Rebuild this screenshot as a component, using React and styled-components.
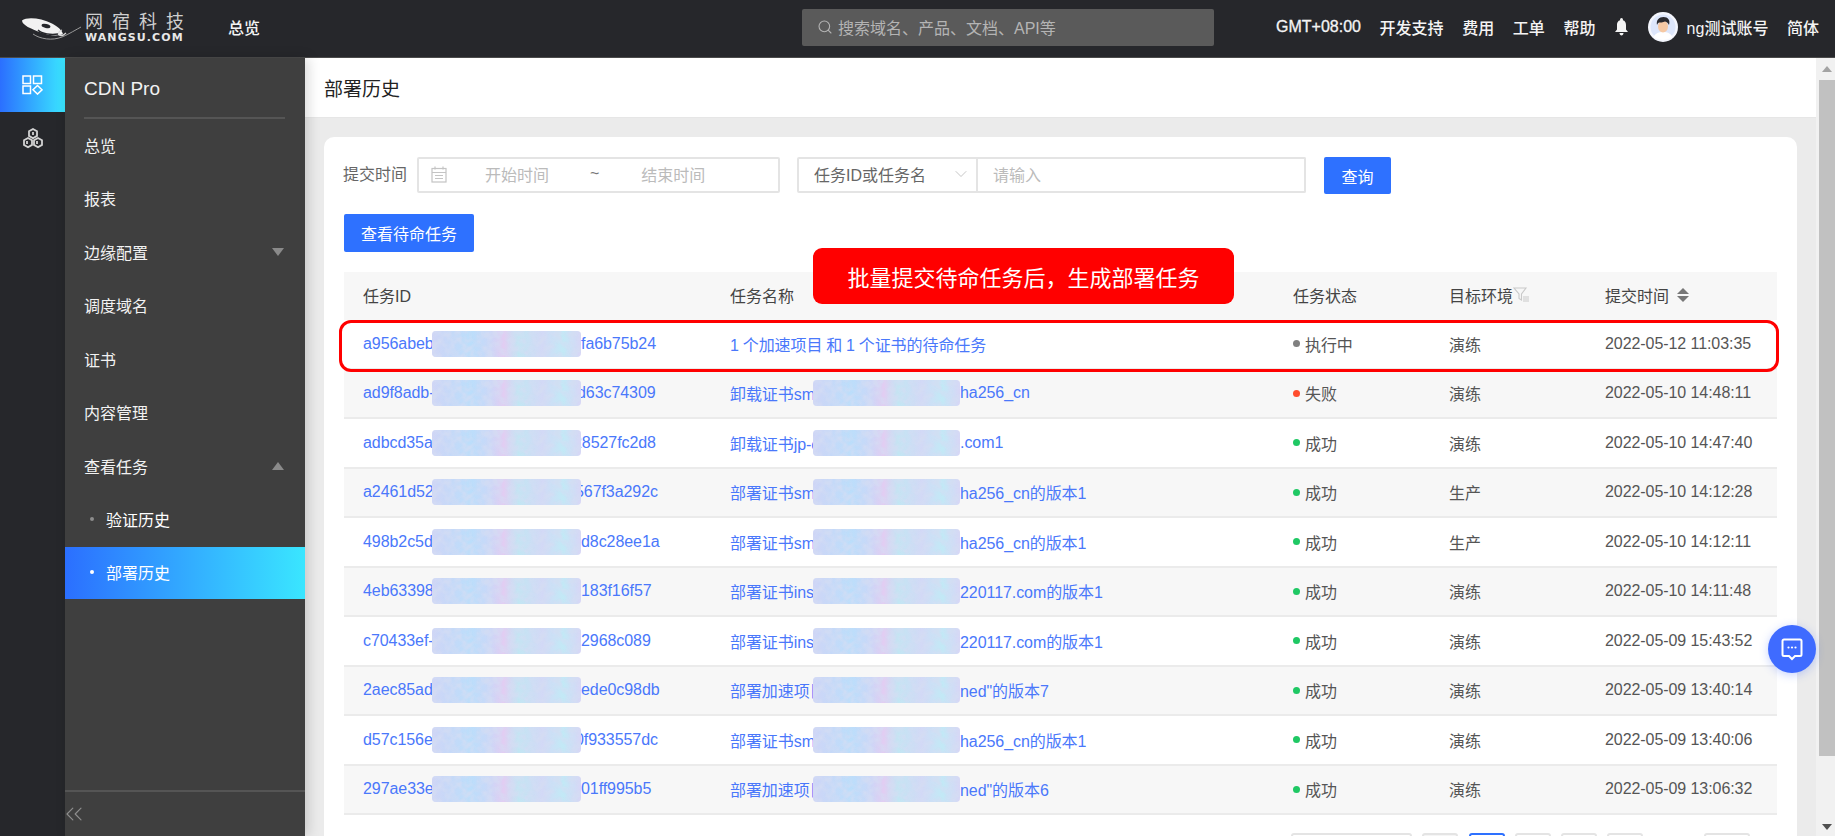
import React from "react";
import styled, {createGlobalStyle} from "styled-components";
import {Search, ChevronDown, ChevronsLeft} from "lucide-react";

const GlobalStyle = createGlobalStyle`
  html, body {
    margin: 0;
    padding: 0;
    height: 100%;
    overflow: hidden;
  }
  body {
    font-family: "Liberation Sans", "Noto Sans CJK SC", sans-serif;
    font-size: 16px;
    color: #555;
  }
  * {
    box-sizing: border-box;
  }
`;

const Page = styled.div`
  width: 100%;
  height: 100vh;
  display: flex;
  flex-direction: column;
  overflow: hidden;
  background: #ebebeb;
`;

/* top bar */

const TopBar = styled.header`
  height: 58px;
  flex: none;
  display: flex;
  align-items: center;
  padding-bottom: 3px;
  background: #26272b;
  border-bottom: 1px solid #4b4b4b;
  color: #f4f4f4;
`;

const LogoWrap = styled.div`
  width: 228px;
  flex: none;
  display: flex;
  align-items: center;
  margin-top: 3px;
  padding-left: 21px;
`;

const LogoText = styled.div`
  margin-left: 2px;
  display: flex;
  flex-direction: column;
  align-items: flex-start;
`;

const LogoName = styled.span`
  font-family: "Liberation Serif", "Noto Sans CJK SC", serif;
  font-size: 18px;
  line-height: 18px;
  letter-spacing: 9px;
  color: #cfcfcf;
  white-space: nowrap;
`;

const LogoDomain = styled.span`
  font-family: "DejaVu Sans", sans-serif;
  font-weight: 700;
  font-size: 11px;
  line-height: 12px;
  letter-spacing: 1.1px;
  margin-top: 1px;
  color: #e8e8e8;
  white-space: nowrap;
`;

const TopLink = styled.span`
  font-size: 16px;
  font-weight: 500;
  white-space: nowrap;
`;

const LatinLink = styled(TopLink)`
  -webkit-text-stroke: 0.3px #f4f4f4;
`;

const SearchBox = styled.div`
  width: 412px;
  height: 37px;
  margin-left: 542px;
  flex: none;
  display: flex;
  align-items: center;
  gap: 5px;
  padding-left: 15px;
  background: #5a5a5a;
  border-radius: 2px;
  color: #b4b4b4;
`;

const TopActions = styled.div`
  margin-left: 62px;
  display: flex;
  align-items: center;
  gap: 18.6px;
`;

const UserBlock = styled.div`
  display: flex;
  align-items: center;
  gap: 9px;
`;

/* side navigation */

const Body = styled.div`
  flex: 1;
  min-height: 0;
  display: flex;
`;

const Rail = styled.nav`
  width: 65px;
  flex: none;
  background: #26272b;
`;

const RailItem = styled.div`
  height: 53.5px;
  display: flex;
  align-items: center;
  justify-content: center;
  background: ${p => (p.$active ? "linear-gradient(90deg, #2b6fff, #3ae6ff)" : "transparent")};
`;

const Menu = styled.aside`
  width: 240px;
  flex: none;
  display: flex;
  flex-direction: column;
  background: #3f3f3f;
  color: #f2f2f2;
  box-shadow: 3px 0 12px rgba(0, 0, 0, 0.16);
  z-index: 2;
`;

const MenuTitle = styled.div`
  height: 61px;
  margin: 0 20px 0 19px;
  padding-top: 2px;
  display: flex;
  align-items: center;
  font-size: 19px;
  border-bottom: 2px solid #555;
`;

const MenuList = styled.div`
  flex: 1;
`;

const MenuItem = styled.div`
  height: 53.5px;
  display: flex;
  align-items: center;
  justify-content: space-between;
  padding: 0 21px 2px 19px;
`;

const Caret = styled.i`
  width: 0;
  height: 0;
  border-left: 6px solid transparent;
  border-right: 6px solid transparent;
  border-top: ${p => (p.$up ? "0" : "8px solid #8a8a8a")};
  border-bottom: ${p => (p.$up ? "8px solid #8a8a8a" : "0")};
`;

const SubItem = styled.div`
  height: ${p => (p.$active ? "52.5px" : "53px")};
  display: flex;
  align-items: center;
  gap: 12px;
  padding: 0 0 2px 25px;
  color: #fff;
  background: ${p => (p.$active ? "linear-gradient(90deg, #2b6fff, #3ae6ff)" : "transparent")};
  &::before {
    content: "";
    width: 4px;
    height: 4px;
    border-radius: 50%;
    background: ${p => (p.$active ? "#fff" : "#8d8d8d")};
  }
`;

const MenuFooter = styled.div`
  height: 46px;
  flex: none;
  display: flex;
  align-items: center;
  border-top: 2px solid #555;
  color: #8e8e8e;
  svg {
    margin-left: -5px;
  }
`;

/* content */

const Main = styled.main`
  flex: 1;
  min-width: 0;
  display: flex;
  flex-direction: column;
  overflow: hidden;
`;

const TitleBar = styled.div`
  height: 60px;
  flex: none;
  display: flex;
  align-items: center;
  padding-left: 19px;
  background: #fff;
  font-size: 19px;
  color: #222;
  border-bottom: 1px solid #e6e6e6;
`;

const Content = styled.div`
  padding: 19px 19px 0;
`;

const Card = styled.section`
  padding: 20px 20px 40px;
  background: #fff;
  border-radius: 10px 10px 0 0;
`;

const FilterRow = styled.div`
  display: flex;
  align-items: flex-start;
  height: 37px;
`;

const FilterLabel = styled.label`
  width: 73px;
  margin-left: -1px;
  line-height: 35px;
  color: #666;
  white-space: nowrap;
`;

const DateField = styled.div`
  width: 363px;
  height: 36px;
  margin-left: 1px;
  display: flex;
  align-items: center;
  padding: 0 0 2px 12px;
  border: 2px solid #e4e4e4;
  border-radius: 2px;
  color: #bbb;
`;

const DateStart = styled.span`
  margin-left: 38px;
`;

const DateSep = styled.span`
  margin-left: 41px;
  color: #777;
`;

const DateEnd = styled.span`
  margin-left: 42px;
`;

const SelectField = styled.div`
  width: 181px;
  height: 36px;
  margin-left: 17px;
  display: flex;
  align-items: center;
  justify-content: space-between;
  padding: 0 5px 2px 15px;
  border: 2px solid #e4e4e4;
  border-radius: 2px 0 0 2px;
  color: #666;
`;

const TextField = styled.div`
  width: 328px;
  height: 36px;
  display: flex;
  align-items: center;
  padding: 0 0 2px 15px;
  border: 2px solid #e4e4e4;
  border-left: 0;
  border-radius: 0 2px 2px 0;
  color: #bbb;
`;

const PrimaryButton = styled.button`
  height: ${p => (p.$tall ? "38px" : "37px")};
  width: ${p => (p.$tall ? "130px" : "67px")};
  margin-left: ${p => (p.$tall ? "0" : "18px")};
  padding: 0;
  border: 0;
  border-radius: 2px;
  font: inherit;
  color: #fff;
  background: #2e71ff;
`;

const ActionRow = styled.div`
  margin: 20px 0;
`;

const TableWrap = styled.div`
  position: relative;
`;

const Callout = styled.div`
  position: absolute;
  left: 469px;
  top: -24px;
  width: 421px;
  height: 56px;
  display: flex;
  align-items: center;
  justify-content: center;
  border-radius: 9px;
  background: #f00;
  color: #fff;
  font-size: 22px;
  white-space: nowrap;
  z-index: 2;
`;

const Highlight = styled.div`
  position: absolute;
  left: -5px;
  top: 48px;
  width: calc(100% + 7px);
  height: 52px;
  border: 3px solid #f00;
  border-radius: 12px;
  pointer-events: none;
`;

const columns = "367px 563px 156px 156px 1fr";

const HeadRow = styled.div`
  height: 48px;
  padding-bottom: 3px;
  display: grid;
  grid-template-columns: ${columns};
  align-items: center;
  background: #f7f7f7;
  color: #444;
`;

const HeadCell = styled.div`
  display: flex;
  align-items: center;
  padding-left: 19px;
`;

const Row = styled.div`
  height: 49.5px;
  display: grid;
  grid-template-columns: ${columns};
  align-items: center;
  background: ${p => (p.$striped ? "#f7f7f7" : "#fff")};
  border-bottom: 2px solid #ebebeb;
`;

const Cell = styled.div`
  display: flex;
  align-items: center;
  padding-left: 19px;
  white-space: nowrap;
  letter-spacing: -0.07px;
`;

const LinkCell = styled(Cell)`
  color: #4a78fb;
`;

const TitleText = styled.span`
  word-spacing: -0.5px;
`;

const Prefix = styled.span`
  width: ${p => p.$width}px;
  flex: none;
`;

const Suffix = styled.span`
  margin-left: ${p => p.$shift || 0}px;
`;

const Mask = styled.span`
  position: relative;
  width: ${p => p.$width}px;
  height: 26px;
  flex: none;
  overflow: hidden;
  border-radius: 4px;
  z-index: 1;
  background: linear-gradient(90deg, #cfd5f6, #bbdefb 26%, #c9d8f8 38%, #e2cdf2 48%, #c2e6f3 58%, #d3d9f6 74%, #c2e9f6 88%, #d8d6f6);
  svg {
    position: absolute;
    inset: 0;
    width: 100%;
    height: 100%;
  }
`;

const Dot = styled.i`
  width: 7px;
  height: 7px;
  margin-right: 5px;
  border-radius: 50%;
  background: ${p => p.$color};
`;

const Pager = styled.div`
  margin-top: 18px;
  display: flex;
  justify-content: flex-end;
  padding-right: 27px;
`;

const PageSize = styled.div`
  width: 121px;
  height: 36px;
  margin-right: 10px;
  border: 2px solid #e4e4e4;
  border-radius: 3px;
`;

const PageButton = styled.div`
  width: 36px;
  height: 36px;
  margin-right: ${p => p.$gap || 10}px;
  border: 2px solid ${p => (p.$active ? "#2e71ff" : "#e4e4e4")};
  border-radius: 3px;
  background: ${p => (p.$muted ? "#f5f5f5" : "#fff")};
`;

const LastButton = styled(PageButton)`
  width: 46px;
  margin-right: 0;
`;

const Scrollbar = styled.div`
  width: 19px;
  flex: none;
  padding-left: 3px;
  display: flex;
  flex-direction: column;
  align-items: center;
  background: #f1f1f1;
`;

const ScrollArrow = styled.div`
  height: ${p => (p.$down ? "auto" : "22px")};
  margin-top: ${p => (p.$down ? "auto" : "0")};
  margin-bottom: ${p => (p.$down ? "6px" : "0")};
  display: flex;
  align-items: center;
`;

const ScrollArrowMark = styled.i`
  width: 0;
  height: 0;
  border-left: 5px solid transparent;
  border-right: 5px solid transparent;
  border-top: ${p => (p.$down ? "6px solid #505050" : "0")};
  border-bottom: ${p => (p.$down ? "0" : "6px solid #a3a3a3")};
`;

const ScrollThumb = styled.div`
  width: 16px;
  height: 676px;
  background: #c1c1c1;
`;

const ChatBubble = styled.div`
  position: fixed;
  left: 1768px;
  top: 625px;
  width: 48px;
  height: 48px;
  display: flex;
  align-items: center;
  justify-content: center;
  border-radius: 50%;
  background: #3f6bff;
  box-shadow: 0 2px 10px rgba(63, 107, 255, 0.3);
  z-index: 3;
`;

const SortIcon = styled.span`
  margin-left: 8px;
  display: flex;
  flex-direction: column;
  gap: 2px;
  &::before,
  &::after {
    content: "";
    width: 0;
    height: 0;
    border-left: 6px solid transparent;
    border-right: 6px solid transparent;
  }
  &::before {
    border-bottom: 6px solid #777;
  }
  &::after {
    border-top: 6px solid #777;
  }
`;

const LogoMark = () => (
  <svg width="62" height="24" viewBox="0 0 62 24">
    <path d="M1 3.5C6-.5 20 1 31 6.5c6 3 10 7 11 10.500-5 2.500-14 1.500-22-1.500C10 12 1 8 1 3.500z" fill="#f2f2f2" />
    <ellipse cx="25" cy="9" rx="4.500" ry="2" fill="#26272b" transform="rotate(12 25 9)" />
    <path d="M17 13c4 4 13 5 20 4" stroke="#26272b" strokeWidth="1.400" fill="none" />
    <path d="M12 17c7 5 19 7 29 3 5-2 10-5 19-10" stroke="#9a9a9a" strokeWidth="1" fill="none" />
    <path d="M41 13c-3 1-4 3-3 5 2 1 5 0 7-2" stroke="#d8d8d8" strokeWidth="1.200" fill="none" />
  </svg>
);

const DashboardIcon = () => (
  <svg width="21" height="20" viewBox="0 0 21 20" fill="none" stroke="#fff" strokeWidth="1.500">
    <rect x="1" y="1" width="7.500" height="7.500" />
    <rect x="11.500" y="1" width="8" height="7.500" />
    <rect x="1" y="11" width="7.500" height="7.500" />
    <path d="M15.500 10.500l4.500 4.300-4.500 4.300-4.500-4.300z" />
  </svg>
);

const ClusterIcon = () => (
  <svg width="22" height="21" viewBox="0 0 22 21" fill="none" stroke="#d2d2d2" strokeWidth="1.800">
    <path d="M11 1l4 2.300v4.600l-4 2.300-4-2.300V3.300z" />
    <path d="M6 10l4 2.300v4.600l-4 2.300-4-2.300v-4.600z" />
    <path d="M16 10l4 2.300v4.600l-4 2.300-4-2.300v-4.600z" />
    <path d="M11 4v3M5 13v3M15 13v3" />
  </svg>
);

const BellIcon = () => (
  <svg width="15" height="18" viewBox="0 0 15 18" fill="#f4f4f4">
    <circle cx="7.500" cy="1.500" r="1.500" />
    <path d="M7.500 2C4.500 2 3 4.300 3 7v4.500L1 14h13l-2-2.500V7c0-2.700-1.500-5-4.500-5z" />
    <path d="M5.500 15h4c0 1.500-1 2.500-2 2.500s-2-1-2-2.500z" />
  </svg>
);

const Avatar = () => (
  <svg width="30" height="30" viewBox="0 0 30 30">
    <circle cx="15" cy="15" r="15" fill="#f4f6fd" />
    <circle cx="15" cy="15" r="12.500" fill="#dde6fb" />
    <path d="M5.500 25c2-4 5.500-5 9.500-5s7.500 1 9.500 5c-5 4-14 4-19 0z" fill="#fff" />
    <ellipse cx="15" cy="14.500" rx="5" ry="6" fill="#f6c9a4" />
    <path d="M9 13c-1-5 2-8 6.500-8s7 3 5.500 8c-1-2-2-3-4-3.500-2 1-5 1-6 1-1 .5-1.500 1.500-2 2.500z" fill="#2b2b30" />
  </svg>
);

const CalendarIcon = () => (
  <svg width="16" height="17" viewBox="0 0 16 17" fill="none" stroke="#c4c4c4" strokeWidth="1.200">
    <rect x="1" y="2.500" width="14" height="13.500" />
    <path d="M1 6.500h14M4 .5v3M12 .5v3M4 9.500h8M4 12.500h8" />
  </svg>
);

const FilterIcon = () => (
  <svg width="17" height="17" viewBox="0 0 17 17" fill="none" stroke="#c9c9c9" strokeWidth="1.100">
    <path d="M1 2h12L8.500 8v6L6 12.500V8z" />
    <path d="M10 11h6M10 13h6M10 15h6" />
  </svg>
);

const ChatIcon = () => (
  <svg width="22" height="24" viewBox="0 0 22 24" fill="none">
    <path d="M3 2.500h16a1.500 1.500 0 0 1 1.500 1.500v13.500a1.500 1.500 0 0 1-1.500 1.500h-5l-3 3-3-3H3a1.500 1.500 0 0 1-1.500-1.500V4A1.500 1.500 0 0 1 3 2.500z" stroke="#fff" strokeWidth="2" />
    <circle cx="7.500" cy="10.500" r="1.100" fill="#fff" />
    <circle cx="11" cy="10.500" r="1.100" fill="#fff" />
    <circle cx="14.500" cy="10.500" r="1.100" fill="#fff" />
  </svg>
);

const MaskNoise = () => (
  <svg viewBox="0 0 149 26" preserveAspectRatio="none">
    <filter id="mottle" x="0" y="0" width="100%" height="100%">
      <feTurbulence type="fractalNoise" baseFrequency="0.13" numOctaves="2" seed="7" />
      <feColorMatrix values="0 0 0 0 0.66  0 0 0 0 0.72  0 0 0 0 0.90  3 0 0 0 -1.100" />
    </filter>
    <rect width="149" height="26" filter="url(#mottle)" opacity="0.7" />
  </svg>
);

const SM_VERSION = ["部署证书sm", "ha256_cn的版本1"];
const INS_VERSION = ["部署证书ins", "220117.com的版本1"];

const tasks = [
  {id: ["a956abeb", "fa6b75b24"], title: "1 个加速项目 和 1 个证书的待命任务", status: "执行中", env: "演练", time: "2022-05-12 11:03:35"},
  {id: ["ad9f8adb-", "d63c74309", -4], name: ["卸载证书sm", "ha256_cn"], status: "失败", env: "演练", time: "2022-05-10 14:48:11"},
  {id: ["adbcd35a", "28527fc2d8", -8], name: ["卸载证书jp-c", ".com1"], status: "成功", env: "演练", time: "2022-05-10 14:47:40"},
  {id: ["a2461d52", "567f3a292c", -6], name: SM_VERSION, status: "成功", env: "生产", time: "2022-05-10 14:12:28"},
  {id: ["498b2c5d", "d8c28ee1a"], name: SM_VERSION, status: "成功", env: "生产", time: "2022-05-10 14:12:11"},
  {id: ["4eb63398", "183f16f57"], name: INS_VERSION, status: "成功", env: "演练", time: "2022-05-10 14:11:48"},
  {id: ["c70433ef-", "2968c089"], name: INS_VERSION, status: "成功", env: "演练", time: "2022-05-09 15:43:52"},
  {id: ["2aec85ad", "ede0c98db"], name: ["部署加速项目", "ned\"的版本7"], status: "成功", env: "演练", time: "2022-05-09 13:40:14"},
  {id: ["d57c156e", "0f933557dc", -6], name: SM_VERSION, status: "成功", env: "演练", time: "2022-05-09 13:40:06"},
  {id: ["297ae33e", "01ff995b5"], name: ["部署加速项目", "ned\"的版本6"], status: "成功", env: "演练", time: "2022-05-09 13:06:32"}
];

const statusColors = {执行中: "#808080", 失败: "#ff4d2e", 成功: "#1fc864"};

const TaskRow = ({task, striped}) => (
  <Row $striped={striped}>
    <LinkCell>
      <Prefix $width={69}>{task.id[0]}</Prefix>
      <Mask $width={149}>
        <MaskNoise />
      </Mask>
      <Suffix $shift={task.id[2]}>{task.id[1]}</Suffix>
    </LinkCell>
    <LinkCell>
      {task.title ? (
        <TitleText>{task.title}</TitleText>
      ) : (
        <React.Fragment>
          <Prefix $width={83}>{task.name[0]}</Prefix>
          <Mask $width={147}>
            <MaskNoise />
          </Mask>
          <Suffix>{task.name[1]}</Suffix>
        </React.Fragment>
      )}
    </LinkCell>
    <Cell>
      <Dot $color={statusColors[task.status]} />
      {task.status}
    </Cell>
    <Cell>{task.env}</Cell>
    <Cell>{task.time}</Cell>
  </Row>
);

const App = () => (
  <Page>
    <GlobalStyle />
    <TopBar>
      <LogoWrap>
        <LogoMark />
        <LogoText>
          <LogoName>网宿科技</LogoName>
          <LogoDomain>WANGSU.COM</LogoDomain>
        </LogoText>
      </LogoWrap>
      <TopLink>总览</TopLink>
      <SearchBox>
        <Search size={16} strokeWidth={1.6} />
        搜索域名、产品、文档、API等
      </SearchBox>
      <TopActions>
        <LatinLink>GMT+08:00</LatinLink>
        <TopLink>开发支持</TopLink>
        <TopLink>费用</TopLink>
        <TopLink>工单</TopLink>
        <TopLink>帮助</TopLink>
        <BellIcon />
        <UserBlock>
          <Avatar />
          <TopLink>ng测试账号</TopLink>
        </UserBlock>
        <TopLink>简体</TopLink>
      </TopActions>
    </TopBar>
    <Body>
      <Rail>
        <RailItem $active>
          <DashboardIcon />
        </RailItem>
        <RailItem>
          <ClusterIcon />
        </RailItem>
      </Rail>
      <Menu>
        <MenuTitle>CDN Pro</MenuTitle>
        <MenuList>
          <MenuItem>总览</MenuItem>
          <MenuItem>报表</MenuItem>
          <MenuItem>
            边缘配置
            <Caret />
          </MenuItem>
          <MenuItem>调度域名</MenuItem>
          <MenuItem>证书</MenuItem>
          <MenuItem>内容管理</MenuItem>
          <MenuItem>
            查看任务
            <Caret $up />
          </MenuItem>
          <SubItem>验证历史</SubItem>
          <SubItem $active>部署历史</SubItem>
        </MenuList>
        <MenuFooter>
          <ChevronsLeft size={28} strokeWidth={1} />
        </MenuFooter>
      </Menu>
      <Main>
        <TitleBar>部署历史</TitleBar>
        <Content>
          <Card>
            <FilterRow>
              <FilterLabel>提交时间</FilterLabel>
              <DateField>
                <CalendarIcon />
                <DateStart>开始时间</DateStart>
                <DateSep>~</DateSep>
                <DateEnd>结束时间</DateEnd>
              </DateField>
              <SelectField>
                任务ID或任务名
                <ChevronDown size={20} strokeWidth={1} color="#bbb" />
              </SelectField>
              <TextField>请输入</TextField>
              <PrimaryButton>查询</PrimaryButton>
            </FilterRow>
            <ActionRow>
              <PrimaryButton $tall>查看待命任务</PrimaryButton>
            </ActionRow>
            <TableWrap>
              <Callout>批量提交待命任务后，生成部署任务</Callout>
              <HeadRow>
                <HeadCell>任务ID</HeadCell>
                <HeadCell>任务名称</HeadCell>
                <HeadCell>任务状态</HeadCell>
                <HeadCell>
                  目标环境
                  <FilterIcon />
                </HeadCell>
                <HeadCell>
                  提交时间
                  <SortIcon />
                </HeadCell>
              </HeadRow>
              {tasks.map((task, index) => (
                <TaskRow key={task.time} task={task} striped={index % 2 === 1} />
              ))}
              <Highlight />
            </TableWrap>
            <Pager>
              <PageSize />
              <PageButton $muted $gap={11} />
              <PageButton $active />
              <PageButton />
              <PageButton />
              <PageButton $gap={61} />
              <LastButton />
            </Pager>
          </Card>
        </Content>
      </Main>
      <Scrollbar>
        <ScrollArrow>
          <ScrollArrowMark />
        </ScrollArrow>
        <ScrollThumb />
        <ScrollArrow $down>
          <ScrollArrowMark $down />
        </ScrollArrow>
      </Scrollbar>
    </Body>
    <ChatBubble>
      <ChatIcon />
    </ChatBubble>
  </Page>
);

export default App;
